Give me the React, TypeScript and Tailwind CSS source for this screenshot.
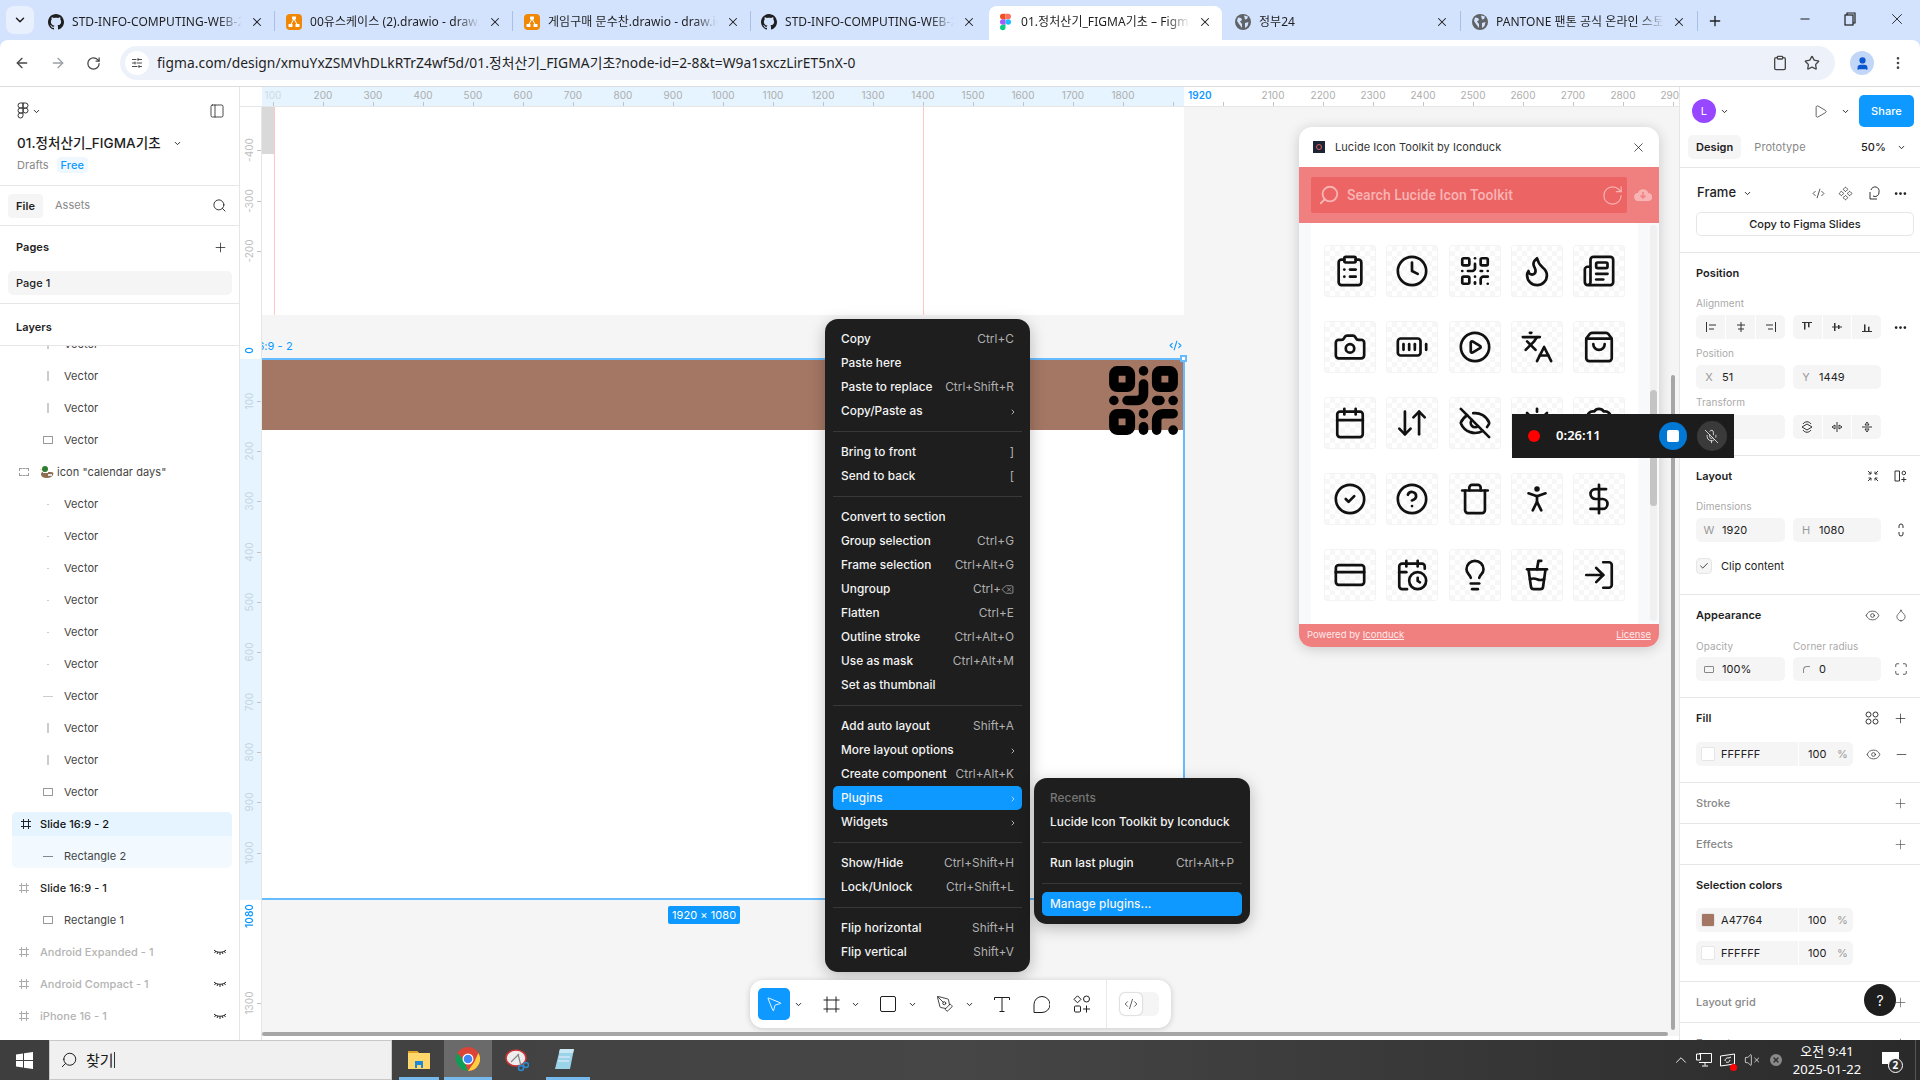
import React from 'react';
import {
  ArrowDownUp, ArrowLeft, ArrowRight, BadgeCheck, BatteryFull, Calendar, CalendarClock, Camera, ChevronDown, ChevronRight, ChevronUp,
  CircleCheck, CircleHelp, CirclePlay, ClipboardList, Clock, CodeXml, Component, CreditCard, CupSoda, Delete, DollarSign,
  Ellipsis, Eye, EyeOff, Droplet, Flame, Languages, Lightbulb, LogIn, Maximize, Minus, MousePointer2, Newspaper, PanelLeft, PenTool,
  PersonStanding, Play, Plus, QrCode, RotateCw, Search, ShoppingBag, Star, Sun, Trash, X, Clipboard, EllipsisVertical, SlidersHorizontal, User, MicOff, VolumeX, Check, CircleX,
} from 'lucide-react';

const GitHub = () => (
  <svg viewBox="0 0 16 16" className="w-4 h-4 shrink-0" fill="#1f1f1f"><path d="M8 0C3.6 0 0 3.6 0 8c0 3.5 2.3 6.5 5.5 7.6.4.1.5-.2.5-.4v-1.4c-2.2.5-2.7-1-2.7-1-.4-.9-.9-1.2-.9-1.2-.7-.5.1-.5.1-.5.8.1 1.2.8 1.2.8.7 1.2 1.9.9 2.3.7.1-.5.3-.9.5-1.1-1.8-.2-3.6-.9-3.6-4 0-.9.3-1.6.8-2.1-.1-.2-.4-1 .1-2.1 0 0 .7-.2 2.2.8.6-.2 1.3-.3 2-.3s1.4.1 2 .3c1.5-1 2.2-.8 2.2-.8.4 1.1.2 1.9.1 2.1.5.6.8 1.3.8 2.1 0 3.1-1.9 3.7-3.7 3.9.3.3.6.8.6 1.5v2.2c0 .2.1.5.6.4C13.7 14.5 16 11.5 16 8c0-4.4-3.6-8-8-8z" /></svg>
);
const Drawio = () => (
  <svg viewBox="0 0 16 16" className="w-4 h-4 shrink-0"><rect width="16" height="16" rx="4" fill="#f08705" /><path d="M8 5L4.5 11M8 5l3.5 6" stroke="#fff" strokeWidth="1" /><rect x="6" y="2.5" width="4" height="3" rx=".5" fill="#fff" /><rect x="2.5" y="10" width="4" height="3" rx=".5" fill="#fff" /><rect x="9.5" y="10" width="4" height="3" rx=".5" fill="#fff" /></svg>
);
const Globe = () => (
  <svg viewBox="0 0 16 16" className="w-4 h-4 shrink-0"><circle cx="8" cy="8" r="8" fill="#5f6368" /><path d="M3 3.5l3 .5 1 2-2 1.5L7 10v4L4 10 2 7zM9 1.5l4 1-1 2.5-2 .5zM10 9l3.5-1-1 4-2.5 2z" fill="#d3e3fd" /></svg>
);
const FigmaColor = () => (
  <svg viewBox="0 0 12 18" className="w-[11px] h-[18px] shrink-0"><path d="M3 0h3v6H3a3 3 0 010-6z" fill="#f24e1e" /><path d="M6 0h3a3 3 0 010 6H6z" fill="#ff7262" /><path d="M3 6h3v6H3a3 3 0 010-6z" fill="#a259ff" /><circle cx="9" cy="9" r="3" fill="#1abcfe" /><path d="M3 12h3v3a3 3 0 11-3-3z" fill="#0acf83" /></svg>
);

const tabs = [
  { icon: <GitHub />, t: 'STD-INFO-COMPUTING-WEB-2', cls: 'w-[239px] pl-[12px] pr-[11px]', sep: true },
  { icon: <Drawio />, t: '00유스케이스 (2).drawio - draw.io', cls: 'w-[238px] pl-[11px] pr-[11px]', sep: true },
  { icon: <Drawio />, t: '게임구매 문수찬.drawio - draw.io', cls: 'w-[238px] pl-[11px] pr-[11px]', sep: true },
  { icon: <GitHub />, t: 'STD-INFO-COMPUTING-WEB-2', cls: 'w-[238px] pl-[10px] pr-[13px]' },
  { icon: <FigmaColor />, t: '01.정처산기_FIGMA기초 – Figma', cls: 'w-[233px] mr-[2px] pl-[8px] pr-[10px] bg-white rounded-t-lg' },
  { icon: <Globe />, t: '정부24', cls: 'w-[237px] pl-[11px] pr-[12px]', sep: true },
  { icon: <Globe />, t: 'PANTONE 팬톤 공식 온라인 스토어', cls: 'w-[237px] pl-[11px] pr-[12px]', sep: true },
];

function TabStrip() {
  return (
    <div className="h-10 shrink-0 bg-[#d3e3fd] flex items-end text-[12px] text-[#1f1f1f] font-['Noto_Sans','Noto_Sans_CJK_KR',sans-serif]">
      <div className="w-[36px] h-full flex items-center">
        <div className="w-7 h-7 rounded-lg bg-[#e8f0fe] flex items-center justify-center ml-[6px]"><ChevronDown size={14} strokeWidth={2.5} /></div>
      </div>
      {tabs.map((tab, i) => (
        <div key={i} className={`relative h-[34px] flex items-center pb-[3px] gap-2 ${tab.cls}`}>
          <div className="w-4 flex justify-center shrink-0">{tab.icon}</div>
          <span className="flex-1 min-w-0 whitespace-nowrap overflow-hidden [mask-image:linear-gradient(to_right,black_86%,transparent)]">{tab.t}</span>
          <X size={14} strokeWidth={1.8} className="shrink-0" />
          {tab.sep ? <div className="absolute right-[0px] top-[5px] h-[20px] w-px bg-[#a8c0e8]" /> : null}
        </div>
      ))}
      <div className="h-[34px] flex items-center pl-[9px] pb-[4px]"><Plus size={16} strokeWidth={2} /></div>
      <div className="ml-auto h-full flex items-center gap-[32px] pr-[14px] pb-[2px]">
        <Minus size={14} />
        <svg width="12" height="14" viewBox="0 0 12 14" fill="none" stroke="#1f1f1f" strokeWidth="1.2"><rect x="1" y="3" width="8" height="10" /><path d="M3 3V1h8v10H9" /></svg>
        <X size={18} strokeWidth={1.2} />
      </div>
    </div>
  );
}

function AddressBar() {
  return (
    <div className="h-[47px] shrink-0 bg-[#d3e3fd]">
      <div className="h-full bg-white rounded-t-lg border-b border-[#dadce0] flex items-center font-['Noto_Sans','Noto_Sans_CJK_KR',sans-serif] text-[#474747]">
        <div className="w-[120px] flex items-center pl-[14px] gap-5 shrink-0">
          <ArrowLeft size={16} /><ArrowRight size={16} className="text-[#9aa0a6]" /><RotateCw size={15} />
        </div>
        <div className="w-[1715px] h-[34px] rounded-full bg-[#edf2fa] flex items-center pl-[5px] pr-[15px] shrink-0">
          <div className="w-6 h-6 rounded-full bg-white flex items-center justify-center mr-[8px]"><SlidersHorizontal size={12} /></div>
          <span className="text-[13.8px] text-[#1f1f1f] whitespace-nowrap">figma.com/design/xmuYxZSMVhDLkRTrZ4wf5d/01.정처산기_FIGMA기초?node-id=2-8&amp;t=W9a1sxczLirET5nX-0</span>
          <div className="ml-auto flex items-center gap-[16px]"><Clipboard size={16} /><Star size={16} /></div>
        </div>
        <div className="flex-1 flex items-center pl-[15px] gap-[16px]">
          <div className="w-6 h-6 rounded-full bg-[#c2d7f8] flex items-center justify-center"><User size={15} fill="#0b57d0" className="text-[#0b57d0]" /></div>
          <EllipsisVertical size={16} />
        </div>
      </div>
    </div>
  );
}

const FigmaGlyph = () => (
  <svg viewBox="0 0 12 18" className="w-[12px] h-[18px]" fill="none" stroke="#333" strokeWidth="1"><path d="M6 1H3.5a2.5 2.5 0 000 5H6zM6 1h2.5a2.5 2.5 0 010 5H6zM6 6H3.5a2.5 2.5 0 000 5H6z" /><circle cx="8.5" cy="8.5" r="2.5" /><path d="M6 11H3.5A2.5 2.5 0 106 13.5z" /></svg>
);

const FrameIcon = ({ c = '#333' }: { c?: string }) => (
  <svg width="12" height="12" viewBox="0 0 12 12" fill="none" stroke={c}><path d="M3.5 1v10M8.5 1v10M1 3.5h10M1 8.5h10" /></svg>
);
const RectI = () => <span className="block w-[10px] h-[8px] border border-[#999]" />;
const VBar = () => <span className="block w-[2px] h-[10px] bg-[#ccc]" />;
const Dot = () => <span className="block w-[2px] h-[1px] bg-[#ccc]" />;
const HBar = ({ c = '#ccc' }: { c?: string }) => <span className="block w-[10px] h-[1px]" style={{ background: c }} />;
const Closed = () => (
  <svg width="14" height="8" viewBox="0 0 14 8" fill="none" stroke="#222" strokeWidth="1"><path d="M1 2c3 3 9 3 12 0M3 3L1.5 5M7 4.5V7M11 3l1.5 2M5 4L4 6M9 4l1 2" /></svg>
);
const Duck = () => (
  <svg width="14" height="12" viewBox="0 0 14 12" className="shrink-0"><path d="M1 8c0-2 3-3 5-2l5 0c2 0 3 1 2 3s-3 3-6 3-6-1-6-4z" fill="#8d6e4e" /><circle cx="5" cy="3" r="3" fill="#2e7d32" /><path d="M1 3L0 3.5 2 4.5z" fill="#e8a33d" /><path d="M3 6h5v1H3z" fill="#fff" /><path d="M8 8h4v2H8z" fill="#e6e6e6" /></svg>
);

function LayerRow({ icon, label }: { icon: React.ReactNode; label: string }) {
  return (
    <div className="h-8 flex items-center text-[11px] text-[#444]">
      <div className="flex items-center justify-center shrink-0 w-[16px] ml-[40px] mr-[8px]">{icon}</div>
      <span>{label}</span>
    </div>
  );
}

function TopRow({ label, hidden, strong }: { label: string; hidden?: boolean; strong?: boolean }) {
  return (
    <div className={`h-8 flex items-center text-[11px] font-medium ${hidden ? 'text-[#b3b3b3]' : 'text-[#1e1e1e]'}`}>
      <div className="w-[40px] flex justify-center pl-[8px] shrink-0"><FrameIcon c={strong ? '#222' : '#aaa'} /></div>
      <span className="flex-1">{label}</span>
      {hidden ? <div className="pr-[12px]"><Closed /></div> : null}
    </div>
  );
}

function LeftPanel() {
  return (
    <div className="w-[240px] shrink-0 h-full flex flex-col bg-white border-r border-[#e6e6e6] text-[11px] text-[#1e1e1e]">
      <div className="h-[99px] border-b border-[#e6e6e6] shrink-0 pl-[17px] pr-[14px]">
        <div className="h-[48px] flex items-center justify-between">
          <div className="flex items-center gap-[3px]"><FigmaGlyph /><ChevronDown size={9} strokeWidth={2.5} /></div>
          <PanelLeft size={16} strokeWidth={1.2} />
        </div>
        <div className="flex items-center text-[13.5px] font-medium h-[20px] mt-[-2px]">01.정처산기_FIGMA기초<ChevronDown size={9} strokeWidth={2.5} className="ml-[12px]" /></div>
        <div className="flex items-center mt-[4px] h-[16px] text-[#888]">Drafts<span className="ml-2 px-[4px] rounded bg-[#f0f8ff] text-[#0d99ff] font-medium h-[16px] leading-[16px]">Free</span></div>
      </div>
      <div className="h-[40px] shrink-0 border-b border-[#e6e6e6] flex items-center pl-[8px] pr-[12px]">
        <div className="h-6 px-[8px] rounded bg-[#f5f5f5] font-semibold leading-6">File</div>
        <div className="ml-[12px] text-[#888]">Assets</div>
        <Search size={15} strokeWidth={1.4} className="ml-auto" />
      </div>
      <div className="h-[78px] shrink-0 border-b border-[#e6e6e6] pl-[8px] pr-[7px]">
        <div className="h-[42px] flex items-center justify-between pl-[8px] pr-[4px] font-semibold">Pages<Plus size={15} strokeWidth={1.2} /></div>
        <div className="h-6 mt-[3px] rounded-[5px] bg-[#f5f5f5] flex items-center pl-[8px] font-medium">Page 1</div>
      </div>
      <div className="h-[42px] pt-[5px] shrink-0 border-b border-[#e6e6e6] flex items-center pl-[16px] font-semibold">Layers</div>
      <div className="flex-1 min-h-0 overflow-hidden">
        <div className="-mt-[18px]">
          <LayerRow icon={<VBar />} label="Vector" />
          <LayerRow icon={<VBar />} label="Vector" />
          <LayerRow icon={<VBar />} label="Vector" />
          <LayerRow icon={<RectI />} label="Vector" />
          <div className="h-8 flex items-center text-[11px] text-[#444]">
            <div className="w-[40px] flex justify-center pl-[8px] shrink-0"><span className="block w-[10px] h-[8px] border border-dashed border-[#999]" /></div>
            <Duck /><span className="ml-[3px]">icon "calendar days"</span>
          </div>
          {[0, 1, 2, 3, 4, 5].map((i) => <LayerRow key={i} icon={<Dot />} label="Vector" />)}
          <LayerRow icon={<HBar />} label="Vector" />
          <LayerRow icon={<VBar />} label="Vector" />
          <LayerRow icon={<VBar />} label="Vector" />
          <LayerRow icon={<RectI />} label="Vector" />
          <div className="ml-[12px] mr-[7px] my-[4px] rounded-[5px] bg-[#f2f9ff]">
            <div className="h-6 rounded-t-[5px] bg-[#e5f4ff] flex items-center font-medium text-[#111]">
              <div className="w-[28px] flex justify-center shrink-0"><FrameIcon c="#222" /></div>Slide 16:9 - 2
            </div>
            <div className="h-8 pt-2 flex items-center text-[#444]"><div className="w-[16px] ml-[28px] mr-[8px] flex justify-center"><HBar c="#888" /></div>Rectangle 2</div>
          </div>
          <TopRow label="Slide 16:9 - 1" />
          <LayerRow icon={<RectI />} label="Rectangle 1" />
          <TopRow label="Android Expanded - 1" hidden />
          <TopRow label="Android Compact - 1" hidden />
          <TopRow label="iPhone 16 - 1" hidden />
        </div>
      </div>
    </div>
  );
}

type Sh = { l?: string; r?: React.ReactNode; arrow?: boolean; active?: boolean; dim?: boolean };
const menu: Sh[][] = [
  [{ l: 'Copy', r: 'Ctrl+C' }, { l: 'Paste here' }, { l: 'Paste to replace', r: 'Ctrl+Shift+R' }, { l: 'Copy/Paste as', arrow: true }],
  [{ l: 'Bring to front', r: ']' }, { l: 'Send to back', r: '[' }],
  [{ l: 'Convert to section' }, { l: 'Group selection', r: 'Ctrl+G' }, { l: 'Frame selection', r: 'Ctrl+Alt+G' }, { l: 'Ungroup', r: <span className="flex items-center">Ctrl+<Delete size={13} strokeWidth={1.4} /></span> }, { l: 'Flatten', r: 'Ctrl+E' }, { l: 'Outline stroke', r: 'Ctrl+Alt+O' }, { l: 'Use as mask', r: 'Ctrl+Alt+M' }, { l: 'Set as thumbnail' }],
  [{ l: 'Add auto layout', r: 'Shift+A' }, { l: 'More layout options', arrow: true }, { l: 'Create component', r: 'Ctrl+Alt+K' }, { l: 'Plugins', arrow: true, active: true }, { l: 'Widgets', arrow: true }],
  [{ l: 'Show/Hide', r: 'Ctrl+Shift+H' }, { l: 'Lock/Unlock', r: 'Ctrl+Shift+L' }],
  [{ l: 'Flip horizontal', r: 'Shift+H' }, { l: 'Flip vertical', r: 'Shift+V' }],
];
const sub: Sh[][] = [
  [{ l: 'Recents', dim: true }, { l: 'Lucide Icon Toolkit by Iconduck' }],
  [{ l: 'Run last plugin', r: 'Ctrl+Alt+P' }],
  [{ l: 'Manage plugins...', active: true }],
];

function MenuBody({ groups }: { groups: Sh[][] }) {
  return (
    <>
      {groups.map((g, i) => (
        <div key={i}>
          {i > 0 ? <div className="h-px bg-[#383838] my-[8px]" /> : null}
          {g.map((it, j) => (
            <div key={j} className={`h-6 pt-[1px] rounded-[5px] px-[8px] flex items-center justify-between text-[11.8px] whitespace-nowrap ${it.active ? 'bg-[#0d99ff]' : ''} ${it.dim ? 'text-[#777]' : 'text-[#f4f4f4]'}`}>
              <span className="font-medium">{it.l}</span>
              {it.r ? <span className="text-[#b0b0b0]">{it.r}</span> : null}
              {it.arrow ? <ChevronRight size={8} strokeWidth={2} className="mr-[-3px]" /> : null}
            </div>
          ))}
        </div>
      ))}
    </>
  );
}

const icons = [
  ClipboardList, Clock, QrCode, Flame, Newspaper,
  Camera, BatteryFull, CirclePlay, Languages, ShoppingBag,
  Calendar, ArrowDownUp, EyeOff, Sun, BadgeCheck,
  CircleCheck, CircleHelp, Trash, PersonStanding, DollarSign,
  CreditCard, CalendarClock, Lightbulb, CupSoda, LogIn,
];

function PluginWindow() {
  return (
    <div className="absolute left-[1299px] top-[127px] w-[360px] h-[520px] rounded-[13px] overflow-hidden bg-white shadow-[0_2px_14px_rgba(0,0,0,0.18)] flex flex-col">
      <div className="h-[40px] shrink-0 flex items-center pl-[14px] pr-[13px] text-[11px] text-[#333]">
        <div className="w-[12px] h-[12px] bg-[#1c2536] mr-[10px] flex items-center justify-center"><span className="block w-[6px] h-[6px] rounded-full border border-[#e05a5a]" /></div>
        Lucide Icon Toolkit by Iconduck
        <X size={15} strokeWidth={1.2} className="ml-auto text-[#222]" />
      </div>
      <div className="h-[56px] shrink-0 bg-[#f08080] flex items-center pl-[12px]">
        <div className="w-[316px] h-[36px] rounded-[2px] bg-[#ec6464] flex items-center pl-[7px] font-['Roboto',sans-serif] font-medium text-[14px] text-[#f8b4b4]">
          <Search size={22} strokeWidth={2} className="-scale-x-100 mr-[7px]" />
          Search Lucide Icon Toolkit
          <RotateCw size={23} strokeWidth={1.2} className="ml-auto mr-[3px]" />
        </div>
        <svg width="18" height="14" viewBox="0 0 18 14" className="ml-[7px]"><path d="M4.5 13a4 4 0 01-.6-8A5.5 5.5 0 0114.3 5 4 4 0 0114 13z" fill="#f8b4b4" /><path d="M9 4v5.5M6.5 7.5L9 10l2.5-2.5" stroke="#f08080" strokeWidth="1.4" fill="none" /></svg>
      </div>
      <div className="flex-1 min-h-0 bg-[#f8f9fa] relative pl-[12px]">
        <div className="w-[327px] h-full bg-white grid grid-cols-[repeat(5,52px)] gap-x-[10.3px] auto-rows-[52px] gap-y-[24px] pl-[13px] pt-[22px]">
          {icons.map((Ic, i) => (
            <div key={i} className="w-[52px] h-[52px] rounded-[3px] border border-[#f4f4f4] bg-[image:repeating-conic-gradient(#f7f7f7_0_25%,#ffffff_0_50%)] bg-[length:10px_10px] flex items-center justify-center">
              <Ic size={34} strokeWidth={1.9} className="text-[#111]" />
            </div>
          ))}
        </div>
        <div className="absolute left-[351px] top-[2px] w-[7px] h-[396px] rounded bg-[#f0f0f0]"><div className="absolute left-0 right-0 top-[165px] h-[116px] rounded bg-[#c4c4c4]" /></div>
      </div>
      <div className="h-[23px] shrink-0 bg-[#f08080] flex items-center justify-between px-[8px] text-[9.5px] tracking-normal text-[#fdeaea]">
        <span>Powered by <span className="underline">Iconduck</span></span>
        <span className="underline">License</span>
      </div>
    </div>
  );
}

function Canvas() {
  const top = Array.from({ length: 29 }, (_, i) => 100 * (i + 1));
  const left = [-400, -300, -200, 100, 200, 300, 400, 500, 600, 700, 800, 900, 1000, 1300];
  return (
    <div className="relative flex-1 min-w-0 h-full overflow-hidden bg-[#f5f5f5]">
      <div className="absolute left-[-240px] top-[-87px] w-[1920px] h-[1080px] font-['Inter','Noto_Sans_CJK_KR',sans-serif]">
        {/* canvas frames */}
        <div className="absolute left-[262px] top-[107px] w-[12px] h-[47px] bg-[#d9d9d9]" />
        <div className="absolute left-[262px] top-[154px] w-[12px] h-[161px] bg-white" />
        <div className="absolute left-[274px] top-[107px] w-[910px] h-[208px] bg-white" />
        <div className="absolute left-[274px] top-[107px] w-px h-[208px] bg-[#ffc7c2]" />
        <div className="absolute left-[923px] top-[107px] w-px h-[208px] bg-[#ffc7c2]" />
        <div className="absolute left-[262px] top-[358px] w-[923px] h-[542px] bg-white border-y-2 border-r-2 border-[#66bcff]">
          <div className="h-[70px] bg-[#a47764]" />
        </div>
        <div className="absolute left-[1180px] top-[355px] w-[7px] h-[7px] bg-white border-2 border-[#66bcff]" />
        <div className="absolute left-[224px] top-[338px] text-[11px] text-[#0d99ff] whitespace-nowrap">Slide 16:9 - 2</div>
        <CodeXml size={13} className="absolute left-[1169px] top-[339px] text-[#0d99ff]" />
        <div className="absolute left-[1104px] top-[361px]"><QrCode size={79} strokeWidth={2.9} className="text-black" /></div>
        <div className="absolute left-[668px] top-[906px] h-[18px] px-[4px] rounded-[2px] bg-[#0d99ff] text-white text-[11px] leading-[18px]">1920 × 1080</div>

        {/* rulers */}
        <div className="absolute left-[240px] top-[87px] w-[1440px] h-[20px] overflow-hidden bg-white border-b border-[#e6e6e6]">
          <div className="absolute left-[22px] top-0 w-[922px] h-[19px] bg-[#e5f4ff]" />
          {top.map((v) => (
            <div key={v} className="absolute top-0 h-[19px]" style={{ left: 223 + v / 2 - 240 }}>
              {v !== 1900 && v !== 2000 ? <span className={`absolute -translate-x-1/2 top-[1px] text-[10px] ${v === 100 ? 'text-[#cfdbe3]' : 'text-[#adadad]'}`}>{v}</span> : null}
              <span className="absolute bottom-0 left-0 w-px h-[4px] bg-[#c4c4c4]" />
            </div>
          ))}
          <span className="absolute left-[948px] top-[1px] text-[10px] font-semibold text-[#0d99ff]">1920</span>
        </div>
        <div className="absolute left-[240px] top-[107px] w-[22px] h-[933px] bg-white border-r border-[#e6e6e6]">
          <div className="absolute left-0 top-[252px] w-[21px] h-[541px] bg-[#e5f4ff]" />
          {left.map((v) => (
            <div key={v} className="absolute right-0 w-full" style={{ top: 351 + v * 0.5015 - 107 }}>
              <span className={`absolute left-[2px] top-0 -translate-y-1/2 [writing-mode:vertical-rl] rotate-180 text-[10px] ${v > 0 && v <= 1000 ? 'text-[#c5d4de]' : 'text-[#bdbdbd]'}`}>{v}</span>
              <span className="absolute right-0 top-0 w-[4px] h-px bg-[#c4c4c4]" />
            </div>
          ))}
          <span className="absolute left-[2px] top-[240px] [writing-mode:vertical-rl] rotate-180 text-[10px] font-semibold text-[#0d99ff]">0</span>
          <span className="absolute left-[2px] top-[797px] [writing-mode:vertical-rl] rotate-180 text-[10px] font-semibold text-[#0d99ff]">1080</span>
        </div>

        <PluginWindow />

        {/* context menus */}
        <div className="absolute left-[825px] top-[319px] w-[205px] rounded-[13px] bg-[#1e1e1e] p-[8px] shadow-[0_4px_16px_rgba(0,0,0,0.25)]"><MenuBody groups={menu} /></div>
        <div className="absolute left-[1034px] top-[778px] w-[216px] rounded-[13px] bg-[#1e1e1e] p-[8px] shadow-[0_4px_16px_rgba(0,0,0,0.25)]"><MenuBody groups={sub} /></div>

        {/* bottom toolbar */}
        <div className="absolute left-[750px] top-[980px] w-[421px] h-[48px] rounded-[13px] bg-white shadow-[0_1px_6px_rgba(0,0,0,0.18)] flex items-center pl-[8px] text-[#1e1e1e]">
          <div className="w-8 h-8 rounded-[5px] bg-[#0d99ff] flex items-center justify-center"><MousePointer2 size={18} strokeWidth={1.2} className="text-white" /></div>
          <ChevronDown size={9} strokeWidth={2.5} className="ml-[4px]" />
          <div className="ml-[12px] w-[32px] flex justify-center"><svg width="17" height="17" viewBox="0 0 17 17" fill="none" stroke="#1e1e1e"><path d="M4 0.5v16M13 0.5v16M0.5 4h16M0.5 13h16" /></svg></div>
          <ChevronDown size={9} strokeWidth={2.5} className="ml-[4px]" />
          <div className="ml-[11px] w-[34px] flex justify-center"><span className="block w-[16px] h-[16px] border border-[#1e1e1e] rounded-[2px]" /></div>
          <ChevronDown size={9} strokeWidth={2.5} className="ml-[3px]" />
          <div className="ml-[11px] w-[34px] flex justify-center"><PenTool size={18} strokeWidth={1.1} /></div>
          <ChevronDown size={9} strokeWidth={2.5} className="ml-[3px]" />
          <div className="ml-[12px] w-[32px] flex justify-center"><svg width="16" height="15" viewBox="0 0 16 15" fill="none" stroke="#1e1e1e"><path d="M.5 3V.5h15V3M8 .5v14M5.5 14.5h5" /></svg></div>
          <div className="ml-[7px] w-[32px] flex justify-center"><svg width="17" height="17" viewBox="0 0 17 17" fill="none" stroke="#1e1e1e"><path d="M1 16.5V8.5a8 8 0 118 8H1z" /></svg></div>
          <div className="ml-[9px] w-[32px] flex justify-center"><svg width="18" height="18" viewBox="0 0 18 18" fill="none" stroke="#1e1e1e"><path d="M4.5.8L8 4.3 4.5 7.8 1 4.3z" /><circle cx="13.5" cy="4" r="3" /><rect x="1.5" y="11" width="6" height="6" rx="1" /><path d="M13.5 10.5v7M10 14h7" /></svg></div>
          <div className="ml-[8px] w-px h-full bg-[#eaeaea]" />
          <div className="ml-[12px] w-[40px] h-6 rounded-[6px] bg-[#f5f5f5] p-px">
            <div className="w-[22px] h-[22px] rounded-[5px] bg-white shadow-[0_0_2px_rgba(0,0,0,0.3)] flex items-center justify-center"><CodeXml size={14} strokeWidth={1.2} /></div>
          </div>
        </div>

        {/* scrollbars */}
        <div className="absolute left-[1671px] top-[375px] w-[4px] h-[655px] rounded bg-[#a6a6a6]" />
        <div className="absolute left-[262px] top-[1032px] w-[1406px] h-[4px] rounded bg-[#a6a6a6]" />
        <div className="absolute left-[262px] top-[1036px] w-[1418px] h-[4px] bg-white" />
      </div>
    </div>
  );
}

const Small = ({ d, sw = 1 }: { d: string; sw?: number }) => (
  <svg width="16" height="16" viewBox="0 0 16 16" fill="none" stroke="#333" strokeWidth={sw} className="shrink-0"><path d={d} /></svg>
);
const Seg = ({ w, ds }: { w: string; ds: string[] }) => (
  <div className={`${w} shrink-0 h-6 rounded-[5px] bg-[#f5f5f5] flex items-stretch`}>
    {ds.map((d, i) => (
      <div key={i} className={`flex-1 flex items-center justify-center ${i ? 'border-l border-white' : ''}`}><Small d={d} /></div>
    ))}
  </div>
);
const Field = ({ a, b, w = 'w-[89px]' }: { a?: React.ReactNode; b?: string; w?: string }) => (
  <div className={`h-6 ${w} shrink-0 rounded-[5px] bg-[#f5f5f5] flex items-center text-[11px] text-[#222]`}>
    <span className="w-[26px] flex justify-center text-[#999] shrink-0">{a}</span>{b}
  </div>
);
const Lbl = ({ t, h = 'h-[22px]', cls = 'pb-[1px]' }: { t: string; h?: string; cls?: string }) => <div className={`${h} ${cls} flex items-center text-[10px] text-[#aaa]`}>{t}</div>;
const Title = ({ t, dim, right }: { t: string; dim?: boolean; right?: React.ReactNode }) => (
  <div className={`h-10 flex items-center justify-between text-[11px] ${dim ? 'text-[#888] font-medium' : 'font-semibold text-[#1e1e1e]'}`}><span>{t}</span><div className="flex items-center gap-[14px] -mr-[4px]">{right}</div></div>
);
const Swatch = ({ c, t }: { c: string; t: string }) => (
  <div className="h-6 w-[157px] shrink-0 rounded-[5px] bg-[#f5f5f5] flex items-center text-[11px] text-[#222]">
    <span className="ml-[5px] w-[14px] h-[14px] rounded-[2px] border border-[#e6e6e6]" style={{ background: c }} />
    <span className="ml-[6px] w-[77px]">{t}</span>
    <span className="w-px h-full bg-white" />
    <span className="ml-[9px] w-[29px]">100</span><span className="text-[#999]">%</span>
  </div>
);
const Grid4 = () => <svg width="14" height="14" viewBox="0 0 14 14" fill="none" stroke="#333"><circle cx="3.5" cy="3.5" r="2.5" /><circle cx="10.5" cy="3.5" r="2.5" /><circle cx="3.5" cy="10.5" r="2.5" /><circle cx="10.5" cy="10.5" r="2.5" /></svg>;

function RightPanel() {
  return (
    <div className="w-[241px] shrink-0 h-full overflow-hidden bg-white border-l border-[#e6e6e6] text-[11px] text-[#1e1e1e]">
      <div className="h-[81px] border-b border-[#e6e6e6]">
        <div className="h-[48px] flex items-center pl-[12px] pr-[6px]">
          <div className="w-6 h-6 rounded-full bg-[#9747ff] text-white flex items-center justify-center text-[11px]">L</div>
          <ChevronDown size={9} strokeWidth={2.5} className="ml-[4px]" />
          <Play size={15} strokeWidth={1.1} className="ml-[84px]" />
          <ChevronDown size={9} strokeWidth={2.5} className="ml-[13px]" />
          <div className="ml-auto w-[55px] h-8 rounded-[5px] bg-[#0d99ff] text-white font-medium flex items-center justify-center">Share</div>
        </div>
        <div className="h-6 flex items-center pl-[8px] pr-[14px]">
          <div className="h-6 px-[8px] rounded-[5px] bg-[#f5f5f5] font-semibold leading-6">Design</div>
          <div className="ml-[13px] text-[#888]">Prototype</div>
          <div className="ml-auto font-medium">50%</div>
          <ChevronDown size={9} strokeWidth={2.5} className="ml-[11px]" />
        </div>
      </div>
      <div className="h-[85px] border-b border-[#e6e6e6] pl-[17px] pr-[6px]">
        <div className="h-[44px] flex items-center pt-[6px]">
          <span className="text-[13px] font-medium">Frame</span><ChevronDown size={9} strokeWidth={2.5} className="ml-[7px]" />
          <div className="ml-auto flex items-center gap-[13px] pr-[6px]"><CodeXml size={13} strokeWidth={1.4} /><Component size={15} strokeWidth={1.2} /><Small d="M5 5a4 4 0 118 2 4 4 0 01-6 4M4 7v7h7" /><Ellipsis size={15} strokeWidth={2.4} className="-ml-[2px]" /></div>
        </div>
        <div className="h-6 -ml-px rounded-[5px] border border-[#e6e6e6] flex items-center justify-center font-medium">Copy to Figma Slides</div>
      </div>
      <div className="h-[203px] border-b border-[#e6e6e6] px-[16px]">
        <Title t="Position" />
        <Lbl t="Alignment" />
        <div className="flex items-center gap-[8px]">
          <Seg w="w-[89px]" ds={['M3.5 3v10M6 6h7M6 10h5', 'M8 3v10M4 6h8M5 10h6', 'M12.5 3v10M3 6h7M5 10h5']} />
          <Seg w="w-[88px]" ds={['M3 3.5h10M6 3.5v7M10 3.5v5M5.5 4v6.5M9.5 4v4', 'M3 8h10M6 4v8M10 6v4M5.5 4v8M9.5 6v4', 'M3 12.5h10M6 12.5v-7M10 12.5v-5M5.5 12v-6.5M9.5 12V8']} />
          <Ellipsis size={15} strokeWidth={2.4} className="ml-[4px] shrink-0" />
        </div>
        <Lbl t="Position" h="h-[26px]" cls="pt-[2px]" />
        <div className="flex gap-[8px]"><Field a="X" b="51" /><Field a="Y" b="1449" w="w-[88px]" /></div>
        <Lbl t="Transform" h="h-[26px]" cls="pt-[1px]" />
        <div className="flex gap-[8px]"><Field /><Seg w="w-[88px]" ds={['M8 5L13 8 8 11 3 8zM4 5c2-3 6-3 8 0M12 11c-2 3-6 3-8 0', 'M8 3v10M6 6v4L3 8zM10 6v4l3-2z', 'M3 8h10M6 6h4L8 3zM6 10h4l-2 3z']} /></div>
      </div>
      <div className="h-[139px] border-b border-[#e6e6e6] px-[16px]">
        <Title t="Layout" right={<><div className="mr-[-2px]"><Small d="M3 3l3 3M6 3.5V6H3.5M13 3l-3 3M10 3.5V6h2.5M3 13l3-3M6 12.5V10H3.5M13 13l-3-3M10 12.5V10h2.5" /></div><div className="mr-[-1px]"><Small d="M2 3h4.5v10H2zM9 5a1.8 1.8 0 103.6 0 1.8 1.8 0 00-3.6 0M10.8 9v5M8.3 11.5h5" /></div></>} />
        <Lbl t="Dimensions" />
        <div className="flex items-center gap-[8px]"><Field a="W" b="1920" /><Field a="H" b="1080" w="w-[88px]" /><div className="ml-[4px] shrink-0"><Small d="M6 6V4a2 2 0 014 0v2M6 10v2a2 2 0 004 0v-2" /></div></div>
        <div className="mt-[12px] h-6 flex items-center gap-[8px]"><span className="w-[16px] h-[16px] rounded-[4px] bg-[#f5f5f5] border border-[#e6e6e6] flex items-center justify-center"><Check size={10} /></span><span className="text-[#222] ml-[1px]">Clip content</span></div>
      </div>
      <div className="h-[103px] border-b border-[#e6e6e6] px-[16px]">
        <Title t="Appearance" right={<><Eye size={15} strokeWidth={1.1} /><Droplet size={14} strokeWidth={1.1} /></>} />
        <div className="flex gap-[8px] h-[22px] items-center text-[10px] text-[#aaa]"><span className="w-[89px]">Opacity</span><span>Corner radius</span></div>
        <div className="flex items-center gap-[8px]">
          <Field a={<span className="block w-[10px] h-[7px] border border-[#888] rounded-[1px]" />} b="100%" />
          <Field a={<span className="block w-[7px] h-[7px] border-l border-t border-[#888] rounded-tl-[4px]" />} b="0" w="w-[88px]" />
          <Maximize size={14} strokeWidth={1.2} className="ml-[5px] shrink-0" />
        </div>
      </div>
      <div className="h-[85px] border-b border-[#e6e6e6] px-[16px]">
        <Title t="Fill" right={<><Grid4 /><Plus size={15} strokeWidth={1.1} /></>} />
        <div className="mt-[4px] flex items-center"><Swatch c="#ffffff" t="FFFFFF" /><Eye size={15} strokeWidth={1.1} className="ml-[13px] shrink-0" /><Minus size={15} strokeWidth={1.1} className="ml-[13px] shrink-0" /></div>
      </div>
      <div className="h-[41px] border-b border-[#e6e6e6] px-[16px]"><Title t="Stroke" dim right={<Plus size={15} strokeWidth={1.1} className="text-[#555]" />} /></div>
      <div className="h-[41px] border-b border-[#e6e6e6] px-[16px]"><Title t="Effects" dim right={<Plus size={15} strokeWidth={1.1} className="text-[#555]" />} /></div>
      <div className="h-[117px] border-b border-[#e6e6e6] px-[16px]">
        <Title t="Selection colors" />
        <div className="mt-[3px]"><Swatch c="#a47764" t="A47764" /></div>
        <div className="mt-[9px]"><Swatch c="#ffffff" t="FFFFFF" /></div>
      </div>
      <div className="h-[41px] border-b border-[#e6e6e6] px-[16px]"><Title t="Layout grid" dim right={<Plus size={15} strokeWidth={1.1} className="text-[#555]" />} /></div>
      <div className="px-[16px]"><Title t="Export" dim right={<Plus size={15} strokeWidth={1.1} className="text-[#555]" />} /></div>
    </div>
  );
}

const Chrome = () => (
  <svg viewBox="0 0 24 24" className="w-6 h-6"><circle cx="12" cy="12" r="12" fill="#db4437" /><path d="M12 24a12 12 0 01-10.4-18L8 13.5 12 24z" fill="#0f9d58" /><path d="M12 24l6-8.5L22.4 6A12 12 0 0112 24z" fill="#ffcd40" /><circle cx="12" cy="12" r="5.5" fill="#fff" /><circle cx="12" cy="12" r="4.3" fill="#4285f4" /></svg>
);

function Taskbar() {
  return (
    <div className="h-10 shrink-0 flex items-stretch bg-[linear-gradient(90deg,#3e3e3e,#464646_50%,#2a2a2a)] text-white font-['Noto_Sans','Noto_Sans_CJK_KR',sans-serif]">
      <div className="w-[49px] flex items-center justify-center">
        <svg width="17" height="17" viewBox="0 0 17 17" fill="#fff"><path d="M0 2.4L7 1.4V8H0zM8 1.2L17 0v8H8zM0 9h7v6.6L0 14.6zM8 9h9v8L8 15.8z" /></svg>
      </div>
      <div className="w-[343px] bg-[#f0f0f0] border border-[#c8c8c8] flex items-center pl-[10px] text-[#1a1a1a] text-[15px]">
        <Search size={18} strokeWidth={1.3} className="-scale-x-100 mr-[8px]" />찾기<span className="w-px h-4 bg-[#333]" />
      </div>
      <div className="w-[7px]" />
      <div className="w-[40px] flex items-center justify-center border-b-[3px] border-[#76b9ed]">
        <svg width="22" height="20" viewBox="0 0 22 20"><path d="M0 2h9l2 2h11v16H0z" fill="#ffd76a" /><path d="M0 2h9l2 2H0z" fill="#e0a526" /><path d="M7 12h8v7h-2v-3H9v3H7z" fill="#1e88d6" /></svg>
      </div>
      <div className="w-[5px]" />
      <div className="w-[48px] flex items-center justify-center bg-[#6a6a6a] border-b-[3px] border-[#76b9ed]"><Chrome /></div>
      <div className="w-[54px] pr-[4px] flex items-center justify-center">
        <svg width="24" height="24" viewBox="0 0 24 24"><ellipse cx="11" cy="10" rx="10" ry="8" fill="#eee" stroke="#c33" strokeWidth="1.5" /><path d="M13 6l3 12M14 6l-8 8" stroke="#888" strokeWidth="1.2" /><circle cx="16" cy="20" r="2.5" fill="none" stroke="#2a8bd0" strokeWidth="1.5" /><circle cx="21" cy="17" r="2.5" fill="none" stroke="#2a8bd0" strokeWidth="1.5" /></svg>
      </div>
      <div className="w-[44px] pr-[6px] flex items-center justify-center border-b-[3px] border-[#76b9ed]">
        <svg width="22" height="24" viewBox="0 0 22 24"><path d="M6 2h14l-4 20H1z" fill="#9bd4e8" /><path d="M6 2h14l-1 4H5z" fill="#c9e8f4" /><path d="M5 10h11M4 14h11" stroke="#eef" strokeWidth="1" /></svg>
      </div>
      <div className="ml-auto flex items-center text-white">
        <ChevronUp size={18} strokeWidth={1.2} className="mr-[6px]" />
        <svg width="16" height="14" viewBox="0 0 16 14" fill="none" stroke="#fff" className="mr-[8px]"><path d="M3 .5h12.5v9H3M9 9.5v3M6 13h6M.5 1h4v6h-4z" /></svg>
        <div className="relative mr-[8px]"><svg width="16" height="15" viewBox="0 0 16 15" fill="none" stroke="#fff"><path d="M.5 3l14-2v10l-14 2zM5 8a3 3 0 014-3l2-1M10 7a3 3 0 01-4 2" /></svg><span className="absolute right-[-1px] bottom-[-3px] w-[7px] h-[7px] rounded-full bg-[#f00]" /></div>
        <VolumeX size={16} strokeWidth={1.1} className="mr-[8px]" />
        <CircleX size={16} strokeWidth={2} fill="#8a8a8a" className="text-[#2f2f2f] mr-[3px]" />
        <div className="w-[80px] text-center text-[13px] leading-[18px] -mr-[2px]"><div>오전 9:41</div><div>2025-01-22</div></div>
        <div className="relative w-[50px] flex justify-center">
          <svg width="17" height="16" viewBox="0 0 17 16" fill="#fff"><path d="M0 0h17v12H9l-3 3v-3H0z" /></svg>
          <span className="absolute left-[23px] top-[6px] w-[15px] h-[15px] rounded-full bg-[#333] border border-white text-[10px] font-bold leading-[13px] text-center">2</span>
        </div>
        <div className="w-px h-full bg-[#555] mr-[4px]" />
      </div>
    </div>
  );
}

export default function App() {
  return (
    <div className="relative w-[1920px] h-[1080px] overflow-hidden flex flex-col font-['Inter','Noto_Sans_CJK_KR',sans-serif] tracking-[0.055px] bg-white">
      <TabStrip />
      <AddressBar />
      <div className="flex-1 min-h-0 flex">
        <LeftPanel />
        <Canvas />
        <RightPanel />
      </div>
      <Taskbar />
      {/* screen-recorder overlay */}
      <div className="absolute left-[1512px] top-[414px] w-[222px] h-[44px] bg-[#1c1c1c] flex items-center text-white">
        <span className="ml-[16px] w-[12px] h-[12px] rounded-full bg-[#f00]" />
        <span className="ml-[16px] text-[13px] font-semibold font-['Noto_Sans',sans-serif]">0:26:11</span>
        <div className="ml-[58px] w-[28px] h-[28px] rounded-full bg-[#0078d4] flex items-center justify-center"><span className="w-[12px] h-[12px] rounded-[2px] bg-white" /></div>
        <div className="ml-[10px] w-[30px] h-[30px] rounded-full bg-[#3a3a3a] flex items-center justify-center"><MicOff size={15} strokeWidth={1.2} /></div>
      </div>
      {/* help */}
      <div className="absolute left-[1864px] top-[984px] w-8 h-8 rounded-full bg-[#1e1e1e] text-white text-[14px] flex items-center justify-center">?</div>
    </div>
  );
}
